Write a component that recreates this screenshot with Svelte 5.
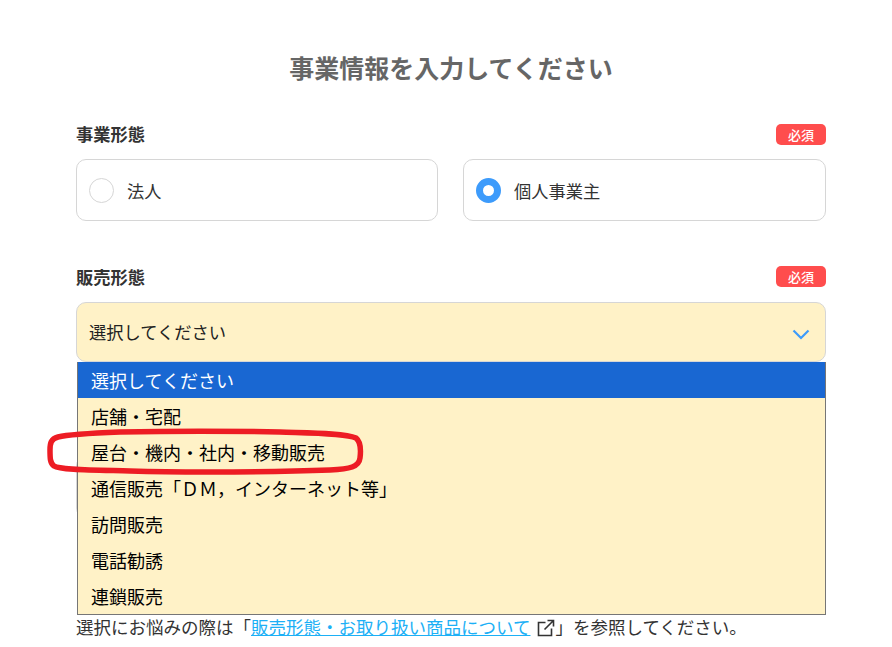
<script lang="ts">
    const options = [
        "選択してください",
        "店舗・宅配",
        "屋台・機内・社内・移動販売",
        "通信販売「ＤＭ，インターネット等」",
        "訪問販売",
        "電話勧誘",
        "連鎖販売",
    ];
    let businessType = "individual";
</script>

<div class="page">
    <h1 class="title">事業情報を入力してください</h1>

    <section class="field first">
        <div class="field-head">
            <span class="label">事業形態</span>
            <span class="required">必須</span>
        </div>
        <div class="choices">
            <div class="choice">
                <span class="radio" class:checked={businessType === "corporate"}></span>
                <span>法人</span>
            </div>
            <div class="choice">
                <span class="radio" class:checked={businessType === "individual"}></span>
                <span>個人事業主</span>
            </div>
        </div>
    </section>

    <section class="field second">
        <div class="field-head">
            <span class="label">販売形態</span>
            <span class="required">必須</span>
        </div>
        <div class="select-wrap">
            <div class="select">
                <span class="select-value">選択してください</span>
                <svg class="chevron" width="18" height="11" viewBox="0 0 18 11" fill="none">
                    <path d="M1.5 1.5 9 9l7.5-7.5" stroke="#3d9bfb" stroke-width="2.2" />
                </svg>
            </div>
            <ul class="dropdown">
                {#each options as option, i}
                    <li class:active={i === 0}>{option}</li>
                {/each}
            </ul>
        </div>
    </section>

    <!-- mostly covered by the open dropdown, only the edges show -->
    <section class="field third">
        <div class="field-head">
            <span></span>
            <span class="required"></span>
        </div>
        <div class="blank-box"></div>
    </section>

    <section class="field fourth">
        <div class="field-head">
            <span></span>
            <span class="required"></span>
        </div>
    </section>

    <p class="hint">
        選択にお悩みの際は「<a href="#top">販売形態・お取り扱い商品について</a>
        <svg class="ext" width="18" height="18" viewBox="0 0 18 18" fill="none">
            <path d="M8.5 3.5H1.5v13h13V9.5M7.5 10.5 16 2M10.5 1.5H16.5V7.5" stroke="#333" stroke-width="1.6" />
        </svg>」を参照してください。
    </p>

    <svg class="marker" width="892" height="647" viewBox="0 0 892 647" fill="none">
        <path
            d="M120 432C95 433 70 434 58 437C51 439 50 443 50 450C50 458 50 463 54 466C60 470 90 470 130 471C190 473 280 472 330 470C350 469 359 467 360 458C361 450 361 442 356 438C345 433 310 433 280 432C230 431 170 431 120 432Z"
            stroke="#ed1c24"
            stroke-width="5.5"
        />
    </svg>
</div>

<style>
    :global(body) {
        margin: 0;
        background: #fff;
    }

    .page {
        position: relative;
        height: 647px;
        overflow: hidden;
        padding: 0 66px 0 76px;
        box-sizing: border-box;
        color: #333;
        font-family: "Noto Sans CJK JP", "Noto Sans", sans-serif;
        font-size: 17.25px;
    }

    .title {
        margin: 0;
        padding-top: 50px;
        height: 35px;
        line-height: 35px;
        font-size: 25px;
        font-weight: 700;
        color: #666;
        text-align: center;
        box-sizing: content-box;
    }

    .field.first {
        margin-top: 39px;
    }

    .field.second {
        margin-top: 45px;
    }

    .field.third {
        margin-top: 59px;
    }

    .field.fourth {
        margin-top: 33px;
    }

    .field-head {
        display: flex;
        align-items: center;
        justify-content: space-between;
        height: 21px;
        margin-bottom: 14px;
    }

    .field.second .field-head {
        margin-bottom: 15px;
    }

    .label {
        margin-top: -2px;
        font-weight: 700;
        line-height: 21px;
    }

    .field.second .label {
        margin-top: 0;
    }

    .required {
        width: 50px;
        height: 21px;
        line-height: 21px;
        border-radius: 5px;
        background: #ff4d4d;
        color: #fff;
        font-size: 13px;
        font-weight: 500;
        text-align: center;
    }

    .choices {
        display: grid;
        grid-template-columns: 362px 363px;
        gap: 25px;
    }

    .choice {
        display: flex;
        align-items: center;
        gap: 13px;
        height: 62px;
        padding-left: 12px;
        box-sizing: border-box;
        border: 1px solid #d6d6d6;
        border-radius: 10px;
    }

    .radio {
        width: 25px;
        height: 25px;
        box-sizing: border-box;
        border: 1px solid #d6d6d6;
        border-radius: 50%;
        background: #fff;
    }

    .radio.checked {
        border: 7.5px solid #3d9bfb;
    }

    .select-wrap {
        position: relative;
        width: 750px;
    }

    .select {
        display: flex;
        align-items: center;
        justify-content: space-between;
        height: 60px;
        padding: 0 15px 0 12px;
        box-sizing: border-box;
        border: 1px solid #d6d6d6;
        border-radius: 10px;
        background: #fff2c7;
        color: #222;
    }

    .select-value {
        margin-top: -2px;
    }

    .chevron {
        margin-top: 5px;
    }

    .dropdown {
        position: absolute;
        top: 60px;
        left: 1px;
        width: 749px;
        margin: 0;
        padding: 0;
        box-sizing: border-box;
        border: 1px solid #767676;
        border-top: 0;
        background: #fff2c7;
        color: #000;
        font-size: 18px;
        list-style: none;
    }

    .dropdown li {
        height: 36px;
        line-height: 36px;
        padding-left: 13px;
    }

    .dropdown li.active {
        background: #1967d2;
        color: #fff;
    }

    .blank-box {
        height: 62px;
        box-sizing: border-box;
        border: 1px solid #d6d6d6;
        border-radius: 10px;
    }

    .hint {
        position: absolute;
        top: 614px;
        left: 76px;
        margin: 0;
        font-size: 17.5px;
        white-space: nowrap;
        line-height: 25px;
    }

    .hint a {
        color: #1cb0f6;
    }

    .ext {
        vertical-align: -3px;
        margin-left: 3px;
    }

    .marker {
        position: absolute;
        top: 0;
        left: 0;
    }
</style>
